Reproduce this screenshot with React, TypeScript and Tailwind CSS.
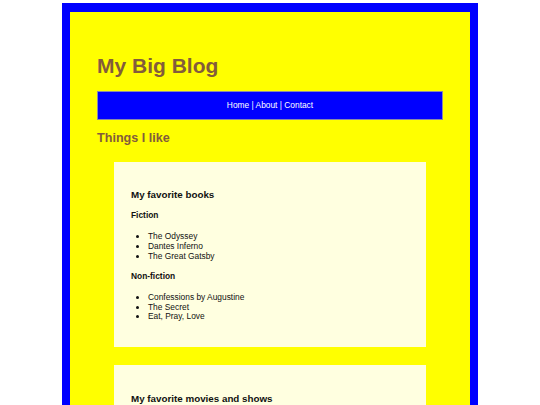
import React from "react";

function Card({ title, sections }: { title: string; sections: { name: string; items: string[] }[] }) {
  return (
    <div className="bg-[#ffffe0] px-[17px] pt-[17px] pb-[17px] text-[#111]">
      <h3 className="mt-[10.2px] text-[9.8px] leading-[11.3px] font-bold">{title}</h3>
      {sections.map((s) => (
        <div key={s.name}>
          <h4 className="mt-[11px] text-[8.4px] leading-[9.65px] font-bold">{s.name}</h4>
          <ul className="mt-[11.2px] mb-[8.4px] list-disc pl-[17px] text-[8.4px] leading-[9.65px]">
            {s.items.map((it) => (
              <li key={it}>{it}</li>
            ))}
          </ul>
        </div>
      ))}
    </div>
  );
}

export default function App() {
  return (
    <div className="min-h-screen bg-white font-['Liberation_Sans',Arial,sans-serif]">
      <div className="mx-auto mt-[3px] w-[416px] border-x-8 border-b-8 border-t-[9px] border-[#0000ff] bg-[#ffff00] px-[27px] pt-[42px] pb-[27px]">
        <h1 className="text-[21px] leading-[24px] font-bold text-[#835c3b]">My Big Blog</h1>
        <nav className="mt-[13px] flex h-[29px] items-center justify-center border border-[#8a8aa8] bg-[#0000ff] text-[8.4px] text-white">
          Home | About | Contact
        </nav>
        <h2 className="mt-[10.7px] text-[12.6px] leading-[14.5px] font-bold text-[#835c3b]">Things I like</h2>
        <div className="mx-[17px] mt-[16.8px] flex flex-col gap-[18px]">
          <Card
            title="My favorite books"
            sections={[
              { name: "Fiction", items: ["The Odyssey", "Dantes Inferno", "The Great Gatsby"] },
              { name: "Non-fiction", items: ["Confessions by Augustine", "The Secret", "Eat, Pray, Love"] },
            ]}
          />
          <Card
            title="My favorite movies and shows"
            sections={[
              { name: "Movies", items: ["The Matrix", "Inception", "Up"] },
              { name: "Shows", items: ["The Office", "Friends", "Lost"] },
            ]}
          />
        </div>
      </div>
    </div>
  );
}
